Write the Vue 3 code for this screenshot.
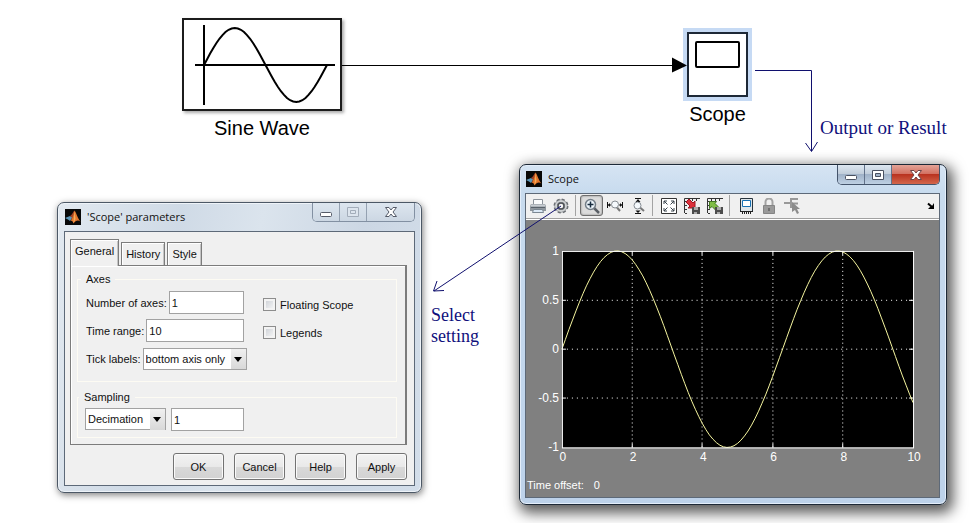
<script setup>
import { ref } from 'vue'

const tab = ref('General')
const tabs = ['General', 'History', 'Style']
const axes = ref('1')
const range = ref('10')
const ticks = ref('bottom axis only')
const sampling = ref('Decimation')
const factor = ref('1')
const floating = ref(false)
const legends = ref(false)

// Plot area inside the scope display
const box = { x: 36, y: 31, w: 352, h: 197 }
const px = (t) => box.x + (t / 10) * box.w
const py = (v) => box.y + ((1 - v) / 2) * box.h
const xTicks = [0, 2, 4, 6, 8, 10]
const yTicks = [1, 0.5, 0, -0.5, -1]
const trace = Array.from({ length: 101 }, (_, i) => {
  const t = i / 10
  return `${px(t).toFixed(1)},${py(Math.sin(t)).toFixed(1)}`
}).join(' ')
const snap = (n) => Math.floor(n) + 0.5

const blockWave = Array.from({ length: 41 }, (_, i) => {
  const a = (i / 40) * Math.PI * 2
  return `${(20 + (i / 40) * 123).toFixed(1)},${(45 - Math.sin(a) * 37).toFixed(1)}`
}).join(' ')
</script>

<template>
  <main class="canvas">
    <figure class="node sine">
      <svg class="sine-box" viewBox="0 0 156 89" fill="none" stroke="#000" stroke-width="2">
        <path d="M11 45H151M20 5V85" />
        <polyline :points="blockWave" />
      </svg>
      <figcaption>Sine Wave</figcaption>
    </figure>

    <figure class="node scope">
      <div class="scope-box"><span class="screen"></span></div>
      <figcaption>Scope</figcaption>
    </figure>

    <p class="note result">Output or Result</p>
    <p class="note setting">Select<br />setting</p>

    <section class="window params">
      <header class="titlebar">
        <svg class="logo" viewBox="0 0 16 16">
          <rect width="16" height="16" fill="#080808" />
          <path d="M0 9 5 7 7.500 8.500 5 12 3 10.500Z" fill="#5b96b8" />
          <path d="M5 7C7 6 8 3 9.500 1.500L8.500 8 5.500 11.500 7 8.500Z" fill="#a34224" />
          <path d="M9.500 1.500C11.500 4 12.500 9 15.500 12.500 12.500 10.500 10.500 12 8.500 14.500 8 12.500 7 11.500 5.500 11.500 8 9.500 8.500 5 9.500 1.500Z" fill="#e2762d" />
          <path d="M9.500 2 10.500 10 8.500 14 9 8Z" fill="#f6b05b" />
        </svg>
        <h2>'Scope' parameters</h2>
        <div class="caption">
          <button type="button" aria-label="Minimize"><svg viewBox="0 0 14 12"><rect x="1.500" y="6.500" width="11" height="4" rx="1" fill="#fff" stroke="#555b68" /></svg></button>
          <button type="button" aria-label="Maximize" disabled><svg viewBox="0 0 14 12"><path d="M1.500 1.500h11v9h-11zM4.500 4.500h5v3h-5z" fill="#dde5ee" stroke="#a3adba" /></svg></button>
          <button type="button" class="close" aria-label="Close"><svg viewBox="0 0 14 12"><path d="M1.500 1.500h3.500l2 2.500 2-2.500h3.500l-3.500 4.500 3.500 4.500h-3.500l-2-2.500-2 2.500h-3.500l3.500-4.500z" fill="#fff" stroke="#555b68" /></svg></button>
        </div>
      </header>

      <form class="client form" @submit.prevent>
        <div class="tabs" role="tablist">
          <button v-for="t in tabs" :key="t" type="button" role="tab" :aria-selected="t === tab" :class="{ active: t === tab }" @click="tab = t">{{ t }}</button>
        </div>
        <div class="panel">
          <fieldset class="axes">
            <legend>Axes</legend>
            <div class="column">
              <div class="field"><label for="axes">Number of axes:</label><input id="axes" v-model="axes" type="text" /></div>
              <div class="field"><label for="range">Time range:</label><input id="range" v-model="range" type="text" /></div>
              <div class="field">
                <label for="ticks">Tick labels:</label>
                <span class="select">
                  <select id="ticks" v-model="ticks"><option>all</option><option>none</option><option>bottom axis only</option></select>
                </span>
              </div>
            </div>
            <div class="checks">
              <label><input v-model="floating" type="checkbox" />Floating Scope</label>
              <label><input v-model="legends" type="checkbox" />Legends</label>
            </div>
          </fieldset>
          <fieldset class="sampling">
            <legend>Sampling</legend>
            <span class="select">
              <select v-model="sampling" aria-label="Sampling"><option>Decimation</option><option>Sample time</option></select>
            </span>
            <input v-model="factor" type="text" aria-label="Decimation" />
          </fieldset>
        </div>
        <div class="actions">
          <button type="submit">OK</button>
          <button type="button">Cancel</button>
          <button type="button">Help</button>
          <button type="button">Apply</button>
        </div>
      </form>
    </section>

    <section class="window viewer">
      <header class="titlebar">
        <svg class="logo" viewBox="0 0 16 16">
          <rect width="16" height="16" fill="#080808" />
          <path d="M0 9 5 7 7.500 8.500 5 12 3 10.500Z" fill="#5b96b8" />
          <path d="M5 7C7 6 8 3 9.500 1.500L8.500 8 5.500 11.500 7 8.500Z" fill="#a34224" />
          <path d="M9.500 1.500C11.500 4 12.500 9 15.500 12.500 12.500 10.500 10.500 12 8.500 14.500 8 12.500 7 11.500 5.500 11.500 8 9.500 8.500 5 9.500 1.500Z" fill="#e2762d" />
          <path d="M9.500 2 10.500 10 8.500 14 9 8Z" fill="#f6b05b" />
        </svg>
        <h2>Scope</h2>
        <div class="caption">
          <button type="button" aria-label="Minimize"><svg viewBox="0 0 14 12"><rect x="1.500" y="6.500" width="11" height="4" rx="1" fill="#fff" stroke="#4a5160" /></svg></button>
          <button type="button" aria-label="Maximize"><svg viewBox="0 0 14 12"><path d="M1.500 1.500h11v9h-11zM4.500 4.500h5v3h-5z" fill="#fff" fill-rule="evenodd" stroke="#4a5160" /></svg></button>
          <button type="button" class="close" aria-label="Close"><svg viewBox="0 0 14 12"><path d="M1.500 1.500h3.500l2 2.500 2-2.500h3.500l-3.500 4.500 3.500 4.500h-3.500l-2-2.500-2 2.500h-3.500l3.500-4.500z" fill="#fff" stroke="#6d4448" /></svg></button>
        </div>
      </header>

      <div class="client">
        <div class="toolbar" role="toolbar">
          <button type="button" aria-label="Print">
            <svg viewBox="0 0 16 16"><path d="M3.500 1.500h9v5h-9z" fill="#fbfcfd" stroke="#8b929a" /><path d="M1 6h14l1 2v5H0V8z" fill="#8f969d" /><path d="M1 6.500h14l.5 2H.5z" fill="#c9ced3" /><path d="M1 9.500h14" stroke="#59626b" /><path d="M3.500 11.500h9l1 3h-11z" fill="#dce9f6" stroke="#7b8792" /></svg>
          </button>
          <button type="button" aria-label="Parameters">
            <svg viewBox="0 0 16 16"><circle cx="8" cy="8" r="6.500" fill="none" stroke="#6d7176" stroke-width="2" stroke-dasharray="3 2.100" /><circle cx="8" cy="8" r="5" fill="none" stroke="#6d7175" stroke-width="3" /><circle cx="8" cy="8" r="5" fill="none" stroke="#cfd2d4" stroke-width="2" /><circle cx="8" cy="8" r="3" fill="#f6f6f6" stroke="#4d5156" stroke-width="1.500" /></svg>
          </button>
          <i class="sep"></i>
          <button type="button" class="pressed" aria-label="Zoom">
            <svg viewBox="0 0 16 16"><path d="M10 10l5 5" stroke="#5a5f66" stroke-width="2.500" /><circle cx="6.500" cy="6.500" r="5" fill="#edf5fb" stroke="#747e88" stroke-width="1.500" /><path d="M3.500 6.500h6M6.500 3.500v6" stroke="#162b3e" stroke-width="1.500" /></svg>
          </button>
          <button type="button" aria-label="Zoom X-axis">
            <svg viewBox="0 0 16 16"><path d="M.5 4v6M15.500 4v6" stroke="#111" /><path d="M1 7h3M12 7h3" stroke="#111" /><path d="M3 5v4L1 7zM13 5v4l2-2z" fill="#111" /><path d="M10 9.500l3 3.500" stroke="#777" stroke-width="2" /><circle cx="8" cy="6.500" r="3.500" fill="#f5f9fc" stroke="#858b91" /></svg>
          </button>
          <button type="button" aria-label="Zoom Y-axis">
            <svg viewBox="0 0 16 16"><path d="M5 .5h6M5 15.500h6" stroke="#111" /><path d="M5.500 4h5L8 1zM5.500 12.500h5L8 15z" fill="#111" /><path d="M10 9.500l4 3.500" stroke="#777" stroke-width="2" /><circle cx="7.500" cy="7.500" r="3.500" fill="#f5f9fc" stroke="#858b91" /></svg>
          </button>
          <i class="sep"></i>
          <button type="button" aria-label="Autoscale">
            <svg viewBox="0 0 16 16"><path d="M.5.5h15v15H.5z" fill="#fff" stroke="#333" /><path d="M3 6V3h3M10 3h3v3M13 10v3h-3M6 13H3v-3M3 3l3.500 3.500M13 3 9.500 6.500M13 13 9.500 9.500M3 13l3.500-3.500" fill="none" stroke="#38434b" /></svg>
          </button>
          <button type="button" aria-label="Save axes settings">
            <svg viewBox="0 0 16 16"><path d="M.5 15V.5H16" fill="none" stroke="#333" /><path d="M2 16V2h14" fill="none" stroke="#333" stroke-width="2" stroke-dasharray="1 3" /><path d="M2 4l3-3 4 4 2-2v7H4l2-2z" fill="#dc303b" stroke="#9d1823" /><path d="M8 9h8v7H8z" fill="#4c4c4c" /><path d="M10 9h4v3h-4zM10 14h3v2h-3z" fill="#aaa" /></svg>
          </button>
          <button type="button" aria-label="Restore axes settings">
            <svg viewBox="0 0 16 16"><path d="M.5 15V.5H16" fill="none" stroke="#333" /><path d="M2 16V2h14" fill="none" stroke="#333" stroke-width="2" stroke-dasharray="1 3" /><path d="M2.500 3.500h7L8 5.500l4 4-3 3-4-4-2.500 2z" fill="#80bd45" stroke="#427622" /><path d="M8 9h8v7H8z" fill="#4c4c4c" /><path d="M10 9h4v3h-4zM10 14h3v2h-3z" fill="#aaa" /></svg>
          </button>
          <i class="sep"></i>
          <button type="button" aria-label="Floating scope">
            <svg viewBox="0 0 16 16"><path d="M2.500.5h12v13h-12z" fill="#dfe6ea" stroke="#29343d" /><path d="M4.500 2.500h8v6h-8z" fill="#fff" stroke="#1670b3" /><path d="M2 13.500h13" stroke="#222" /><path d="M4 15h10" stroke="#222" stroke-width="2" stroke-dasharray="1 1" /></svg>
          </button>
          <button type="button" aria-label="Lock axes">
            <svg viewBox="0 0 16 16"><path d="M4.500 8V4a3.500 3.500 0 0 1 7 0v4" fill="none" stroke="#a3a3a3" stroke-width="2" /><path d="M2.500 7.500h11v8h-11z" fill="#9a9a9a" stroke="#858585" /><path d="M8 10v3" stroke="#707070" stroke-width="2" /></svg>
          </button>
          <button type="button" aria-label="Signal selection">
            <svg viewBox="0 0 16 16"><path d="M0 5h8M7 0v10M6 1h8M7 5.500h7" stroke="#999" stroke-width="2" fill="none" /><path d="M8 4l8 7h-3l2 4-2 1-2-4-3 2z" fill="#8c8c8c" /></svg>
          </button>
          <button type="button" class="dock" aria-label="Dock">
            <svg viewBox="0 0 8 8"><path d="M1 1.500 5 5" stroke="#000" stroke-width="2" /><path d="M7 1v6H1l2-2 2-1z" fill="#000" /></svg>
          </button>
        </div>

        <svg class="plot" viewBox="0 0 414 254">
          <rect :x="box.x" :y="box.y" :width="box.w" :height="box.h" fill="#000" />
          <g stroke="#fff" stroke-width="1">
            <template v-for="x in xTicks.slice(1, -1)" :key="x">
              <path :d="`M${snap(px(x))} ${box.y}V${box.y + box.h}`" stroke-dasharray="1 3" />
              <path :d="`M${snap(px(x))} ${box.y}v4M${snap(px(x))} ${box.y + box.h}v-4`" />
            </template>
            <template v-for="y in yTicks.slice(1, -1)" :key="y">
              <path :d="`M${box.x} ${snap(py(y))}H${box.x + box.w}`" stroke-dasharray="1 4" />
              <path :d="`M${box.x} ${snap(py(y))}h4M${box.x + box.w} ${snap(py(y))}h-4`" />
            </template>
          </g>
          <polyline :points="trace" fill="none" stroke="#f6f6a0" />
          <rect :x="box.x + 0.5" :y="box.y + 0.5" :width="box.w" :height="box.h" fill="none" stroke="#fff" />
          <g class="ticks">
            <text v-for="x in xTicks" :key="x" :x="px(x) + 1" :y="box.y + box.h + 14" text-anchor="middle">{{ x }}</text>
            <text v-for="y in yTicks" :key="y" :x="box.x - 3" :y="py(y) + 4" text-anchor="end">{{ y }}</text>
          </g>
        </svg>
        <footer class="status"><span>Time offset:</span><span>0</span></footer>
      </div>
    </section>

    <svg class="wires" fill="none">
      <path d="M342 65.500H674" stroke="#000" />
      <path d="M672 57.500 687 65.500 672 72.500Z" fill="#000" />
      <g stroke="#10106e">
        <path d="M755 70.500H811.500V151" />
        <path d="M805.500 143 811.500 151.500 817.500 142" />
        <path d="M561 206 434 291M437 281 433.500 291 444 290.500" />
      </g>
    </svg>
  </main>
</template>

<style>
body {
  margin: 0;
  background: #fff;
}
</style>

<style scoped>
* {
  box-sizing: border-box;
}
.canvas {
  position: relative;
  min-height: 100vh;
  overflow: hidden;
  font: 11px/14px "Liberation Sans", Arial, sans-serif;
  color: #111;
}
.node {
  position: absolute;
  margin: 0;
  display: flex;
  flex-direction: column;
  align-items: center;
  font-size: 20px;
  line-height: 24px;
  color: #000;
}
.sine {
  left: 182px;
  top: 18px;
  gap: 5px;
}
.sine-box {
  width: 160px;
  height: 93px;
  border: 2px solid #1c1c1c;
  background: #fff;
  box-shadow: 2px 2px 3px #aaa;
}
.scope {
  left: 687px;
  top: 32px;
  gap: 5px;
}
.scope-box {
  width: 61px;
  height: 65px;
  padding: 7px 6px;
  border: 2px solid #1d2836;
  background: #fff;
  box-shadow: 0 0 0 4px #c6daf4;
}
.screen {
  display: block;
  height: 27px;
  border: 2px solid #000;
  border-radius: 2px;
}
.note {
  position: absolute;
  margin: 0;
  font: 18px/21px "Liberation Serif", "Times New Roman", serif;
  color: #10107c;
}
.result {
  left: 820px;
  top: 117px;
  font-size: 19px;
}
.setting {
  left: 431px;
  top: 305px;
}
.wires {
  position: absolute;
  inset: 0;
  width: 100%;
  height: 100%;
  pointer-events: none;
}

.window {
  position: absolute;
  border: 1px solid #4c5866;
  border-radius: 7px;
}
.params {
  left: 57px;
  top: 202px;
  width: 365px;
  padding: 0 6px 6px;
  background: linear-gradient(100deg, #e2e9f0, #cfdae6 30%, #dbe4ed 50%, #ccd7e4 75%, #d3deea);
  box-shadow: inset 0 0 0 1px #eef3f8, 1px 2px 7px rgba(0, 0, 0, 0.5);
}
.viewer {
  left: 519px;
  top: 164px;
  width: 428px;
  padding: 0 6px 6px 5px;
  border-color: #1d2937;
  background: linear-gradient(#d6e4f3, #c8dbee 28px, #bdd2ea);
  box-shadow: inset 0 0 0 1px #e4eefa, 3px 5px 14px 3px rgba(0, 0, 0, 0.65);
}
.titlebar {
  display: flex;
  align-items: center;
  gap: 6px;
  height: 28px;
  padding-left: 1px;
}
.logo {
  width: 16px;
  height: 16px;
  flex: none;
}
h2 {
  flex: 1;
  margin: 0;
  font: 11px/16px "Open Sans", "Noto Sans", sans-serif;
  color: #111;
}
.caption {
  align-self: flex-start;
  display: flex;
  height: 19px;
  border: 1px solid #8290a2;
  border-top: 0;
  border-radius: 0 0 5px 5px;
  overflow: hidden;
}
.caption button {
  display: grid;
  place-items: center;
  width: 27px;
  padding: 0;
  border: 0;
  border-right: 1px solid #94a1b1;
  background: linear-gradient(#dde6ef, #ccd7e3);
}
.caption .close {
  width: 47px;
  border-right: 0;
}
.caption svg {
  width: 14px;
  height: 12px;
}
.viewer .caption {
  height: 20px;
  border-color: #44546b;
}
.viewer .caption button {
  border-color: #62728a;
  background: linear-gradient(#dce6f0, #c2cedb 45%, #a0b2c8 50%, #bed0e3);
}
.viewer .caption .close {
  background: linear-gradient(#e3a397, #d37263 45%, #b93320 50%, #d3664b);
}
.client {
  border: 1px solid #5d6978;
  background: #f0f0f0;
}

.form {
  padding: 7px 7px 5px 5px;
}
.tabs {
  display: flex;
  align-items: flex-end;
  gap: 2px;
}
.tabs button {
  height: 23px;
  padding: 0 4px;
  border: 1px solid #7c7c7c;
  border-bottom: 0;
  background: #f0f0f0;
  box-shadow: inset 1px 1px #fff, inset -1px 0 #c4c4c4;
  font: inherit;
  color: #111;
}
.tabs .active {
  position: relative;
  height: 27px;
  margin-bottom: -1px;
  padding-bottom: 5px;
}
.panel {
  padding: 6px 8px 6px 6px;
  border: 1px solid #7c7c7c;
  border-right-width: 2px;
  box-shadow: inset 1px 1px #fff;
}
fieldset {
  display: flex;
  min-width: 0;
  margin: 0;
  border: 1px solid #fdfbf3;
}
legend {
  padding: 0 5px;
}
.axes {
  gap: 16px;
  padding: 5px 8px 11px;
}
.axes legend {
  margin-left: -5px;
}
.column {
  display: flex;
  flex-direction: column;
  gap: 5px;
  width: 161px;
}
.field {
  display: flex;
  align-items: center;
  gap: 2px;
  height: 23px;
}
input[type='text'] {
  width: 0;
  height: 23px;
  flex: 1;
  margin: 0 3px 0 0;
  padding: 0 2px;
  border: 1px solid #a2a2a2;
  background: #fff;
  font: inherit;
  color: #111;
}
.select {
  position: relative;
  flex: 1;
}
.select::before {
  content: '';
  position: absolute;
  top: 1px;
  right: 1px;
  bottom: 1px;
  width: 15px;
  background: linear-gradient(#f0f0f0, #d8d8d8);
  pointer-events: none;
}
.select::after {
  content: '';
  position: absolute;
  top: 9px;
  right: 5px;
  border: 4px solid transparent;
  border-top: 5px solid #000;
  border-bottom: 0;
  pointer-events: none;
}
select {
  display: block;
  width: 100%;
  height: 22px;
  padding: 0 0 0 2px;
  appearance: none;
  border: 1px solid #a2a2a2;
  border-radius: 0;
  background: #fff;
  font: inherit;
  color: #111;
}
.checks {
  display: flex;
  flex-direction: column;
  gap: 5px;
}
.checks label {
  display: flex;
  align-items: center;
  gap: 4px;
  height: 23px;
  padding-top: 4px;
}
.checks input {
  appearance: none;
  width: 13px;
  height: 13px;
  margin: 0;
  border: 1px solid #8d8d8d;
  background: linear-gradient(135deg, #c8ccd2, #fafafa);
  box-shadow: inset 0 0 0 2px #f3f3f3;
}
.sampling {
  gap: 5px;
  margin-top: 8px;
  padding: 4px 7px 6px;
}
.sampling legend {
  margin-left: -6px;
}
.sampling .select {
  flex: none;
  width: 81px;
}
.sampling input[type='text'] {
  flex: none;
  width: 73px;
}
.actions {
  display: flex;
  justify-content: flex-end;
  gap: 10px;
  padding-top: 8px;
}
.actions button {
  width: 51px;
  height: 27px;
  padding: 0;
  border: 1px solid #737373;
  border-radius: 3px;
  background: linear-gradient(#f3f3f3, #e9e9e9 50%, #d9d9d9 52%, #d2d2d2);
  box-shadow: inset 0 0 0 1px #fafafa;
  font: inherit;
  color: #111;
}

.viewer .client {
  background: #808080;
}
.toolbar {
  display: flex;
  align-items: center;
  height: 26px;
  padding-bottom: 2px;
  border-bottom: 1px solid #fff;
  box-shadow: inset 0 -1px #a0a0a0;
  background: #f0f0f0;
}
.toolbar button {
  display: grid;
  place-items: center;
  width: 23px;
  height: 21px;
  padding: 0;
  border: 0;
  background: none;
}
.toolbar svg {
  width: 16px;
  height: 16px;
}
.toolbar .pressed {
  border: 1px solid #6f6f6f;
  border-radius: 3px;
  background: #dcdcdc;
  box-shadow: inset 0 0 2px #777;
}
.sep {
  width: 1px;
  height: 21px;
  margin: 0 4px 0 3px;
  background: #a3a3a3;
}
.toolbar .dock {
  width: 16px;
  margin-left: auto;
}
.toolbar .dock svg {
  width: 8px;
  height: 8px;
}
.plot {
  display: block;
  width: 100%;
}
.ticks {
  font-size: 12px;
  fill: #fff;
}
.status {
  display: flex;
  gap: 10px;
  padding: 5px 1px;
  color: #fff;
}
</style>
